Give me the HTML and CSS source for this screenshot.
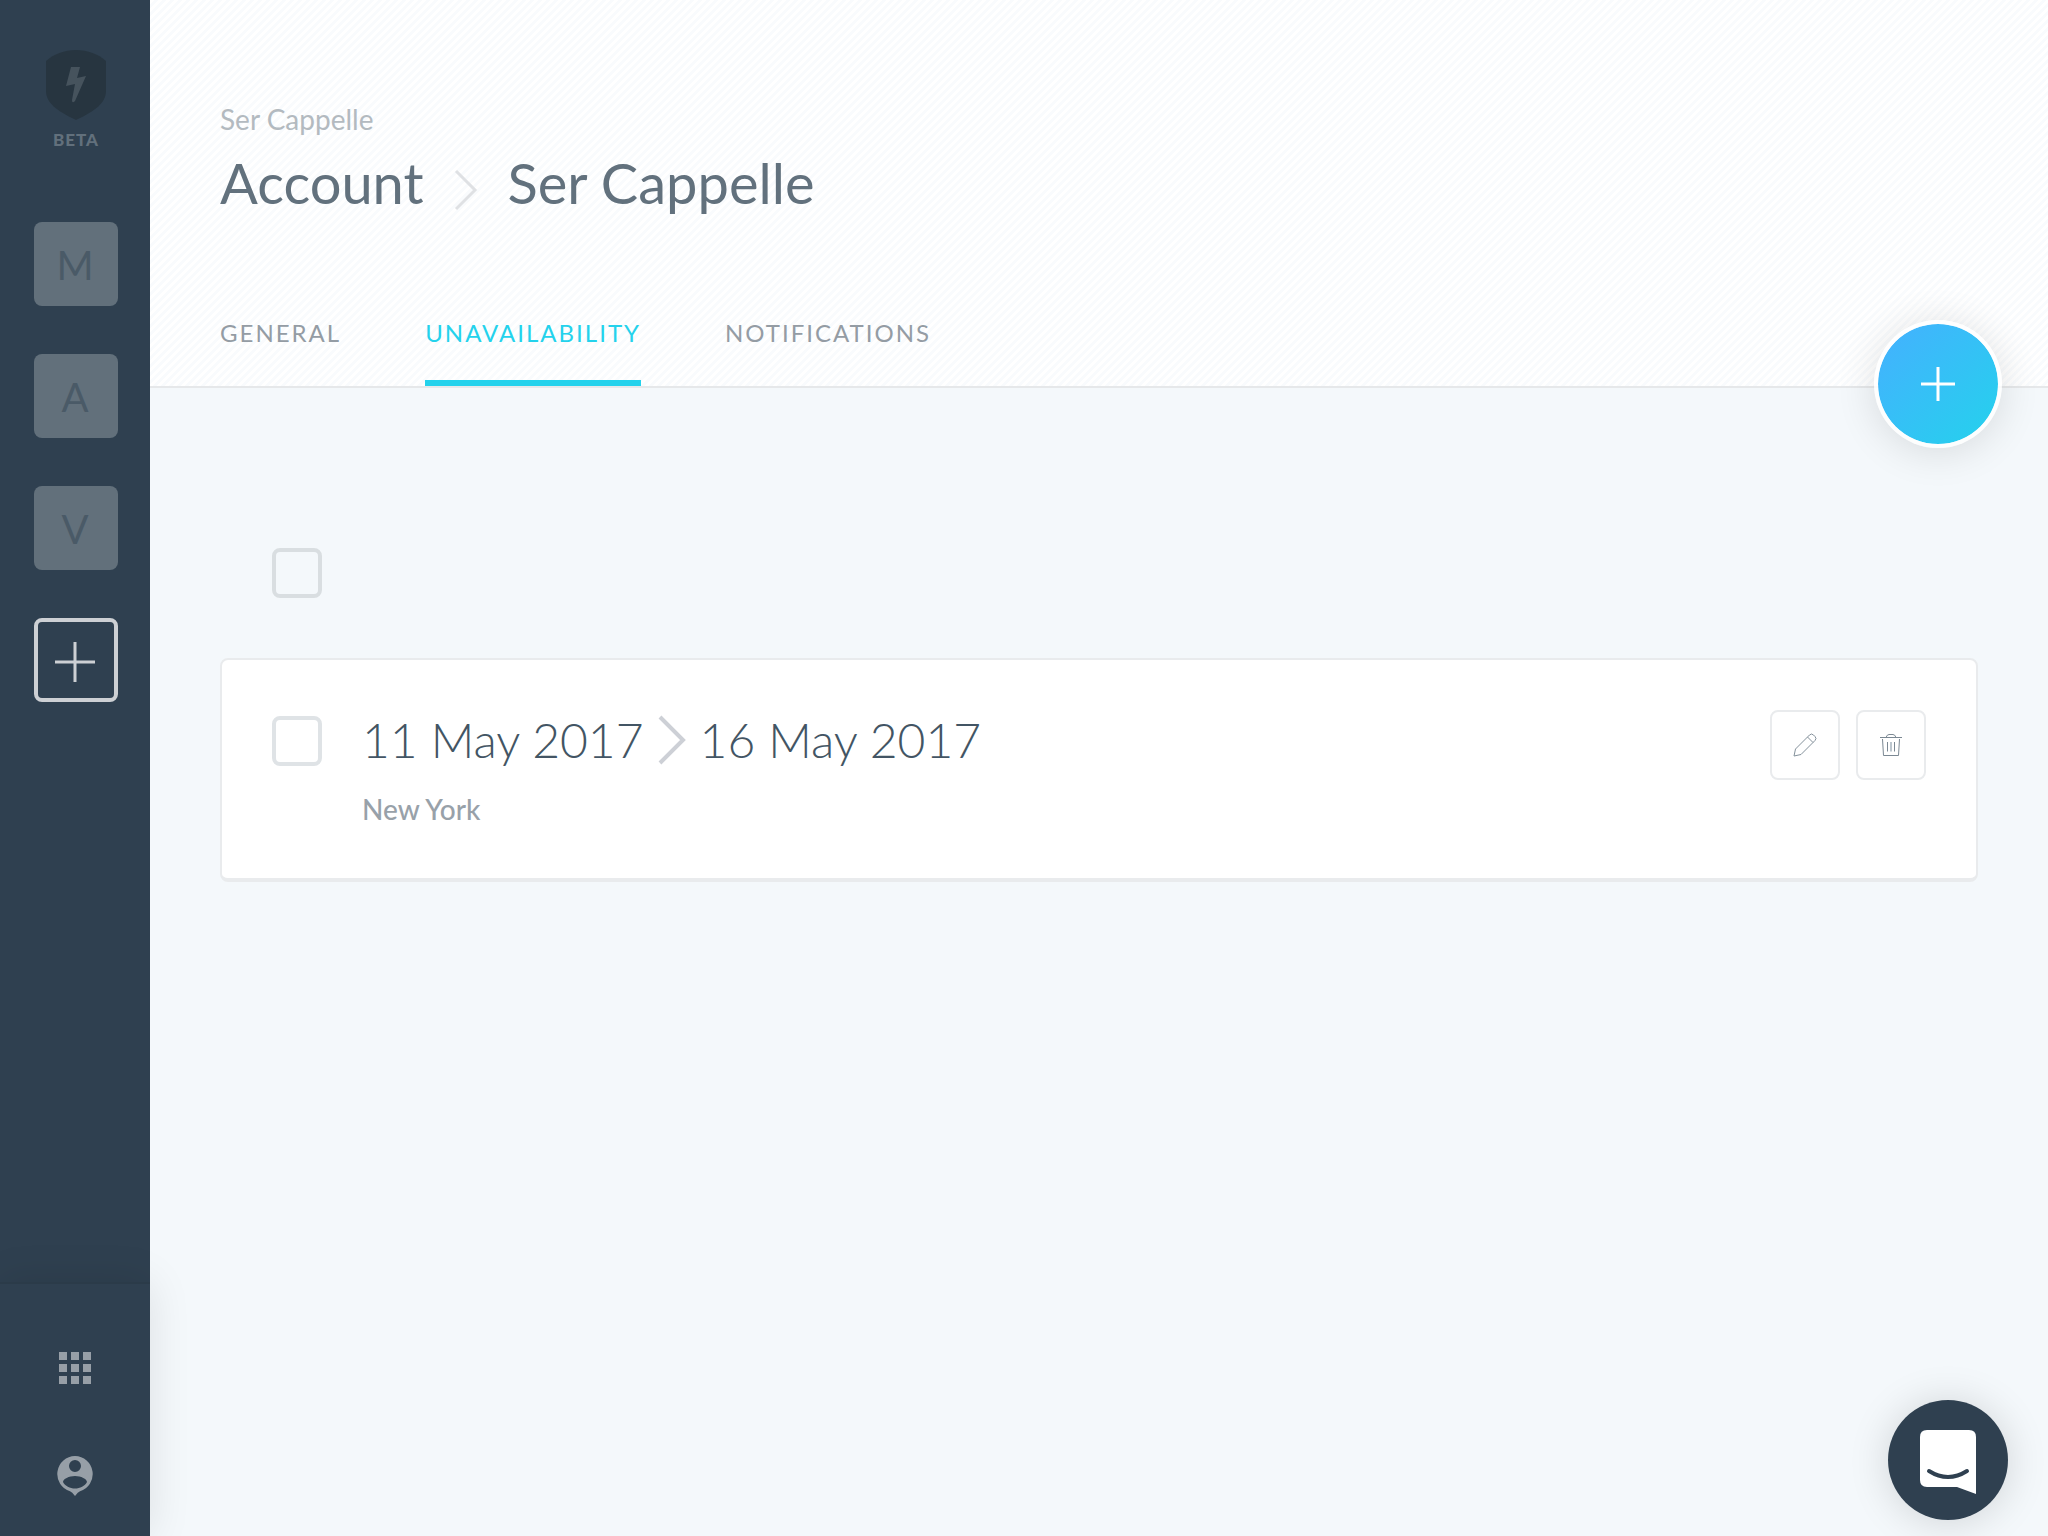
FILE: index.html
```html
<!DOCTYPE html>
<html lang="en">
<head>
<meta charset="UTF-8">
<title>Account - Ser Cappelle</title>

<link rel="stylesheet" href="styles.css">
</head>

<body>

<!-- ===== SIDEBAR ===== -->
<nav id="sidebar">
  <a class="logo" href="#">
    <svg width="60" height="70" viewBox="0 0 60 70">
      <path fill="#273540" d="M30 0C42 0 52 4 60 11V41C60 53 49 61 30 70C11 61 0 53 0 41V11C8 4 18 0 30 0Z"/>
      <path fill="#46535d" d="M25 17H34L31 28L40 26L29 51Q26 54 26 50L29 34L20 36Z"/>
    </svg>
    <span>BETA</span>
  </a>

  <div class="teams">
    <a class="team" href="#">M</a>
    <a class="team" href="#">A</a>
    <a class="team" href="#">V</a>
    <button class="addTeam" aria-label="Add team">
      <svg width="40" height="40" viewBox="0 0 40 40"><path d="M20 0V40M0 20H40" stroke="#cdd0d4" stroke-width="3"/></svg>
    </button>
  </div>

  <div class="sideBottom">
    <button aria-label="Apps">
      <svg width="32" height="32" viewBox="0 0 32 32" fill="#979fa7">
        <path d="M0 0h8v8H0zM12 0h8v8h-8zM24 0h8v8h-8zM0 12h8v8H0zM12 12h8v8h-8zM24 12h8v8h-8zM0 24h8v8H0zM12 24h8v8h-8zM24 24h8v8h-8z"/>
      </svg>
    </button>
    <button aria-label="Profile">
      <svg width="36" height="40" viewBox="0 0 36 40" fill="#979fa7">
        <path fill-rule="evenodd" d="M18 0a18 18 0 0 1 5 35.200Q21 36 18 40Q15 36 13 35.200A18 18 0 0 1 18 0ZM18 4a6 6 0 1 0 0 12a6 6 0 1 0 0-12ZM18 20C12 20 6 23 6 26C8 30 13 32.500 18 32.500S28 30 30 26C30 23 24 20 18 20Z"/>
      </svg>
    </button>
  </div>
</nav>

<!-- ===== MAIN ===== -->
<main id="main">
  <header id="header">
    <div class="subtitle">Ser Cappelle</div>
    <h1>
      Account
      <svg width="24" height="42" viewBox="0 0 24 42"><path d="M2 2L21 21L2 40" fill="none" stroke="#dfe1e4" stroke-width="3"/></svg>
      Ser Cappelle
    </h1>
    <div class="tabs">
      <a href="#">GENERAL</a>
      <a href="#" class="active">UNAVAILABILITY</a>
      <a href="#">NOTIFICATIONS</a>
    </div>
    <button id="addBtn" aria-label="Add unavailability">
      <svg width="34" height="34" viewBox="0 0 34 34"><path d="M17 0V34M0 17H34" stroke="#fff" stroke-width="3"/></svg>
    </button>
  </header>

  <section id="content">
    <div class="selectAll">
      <input type="checkbox" aria-label="Select all">
    </div>

    <div class="card">
      <input type="checkbox" aria-label="Select 11 May 2017 to 16 May 2017">
      <div class="info">
        <div class="dates">
          <span>11 May 2017</span>
          <svg width="28" height="50" viewBox="0 0 28 50"><path d="M2 2L25 25L2 48" fill="none" stroke="#cdd0d6" stroke-width="4"/></svg>
          <span>16 May 2017</span>
        </div>
        <div class="place">New York</div>
      </div>
      <div class="actions">
        <button aria-label="Edit">
          <svg width="24" height="24" viewBox="0 0 24 24" fill="none" stroke="#84919b">
            <path d="M1 23L2.500 16L16.500 2Q18.500 0 20.500 2L22 3.500Q24 5.500 22 7.500L8 21.500ZM14.500 4L20 9.500"/>
          </svg>
        </button>
        <button aria-label="Delete">
          <svg width="24" height="24" viewBox="0 0 24 24" fill="none" stroke="#7b8893">
            <path d="M1 4.500H23M7 4.500Q8 1.500 10 1.500H14Q16 1.500 17 4.500M3.500 6L4.500 22.500H19.500L20.500 6M8.500 9V18.500M15.500 9V18.500"/>
            <path d="M12 9V18.500" stroke="#bcc6ce" stroke-width="2"/>
          </svg>
        </button>
      </div>
    </div>
  </section>
</main>

<!-- ===== CHAT ===== -->
<button id="chatBtn" aria-label="Open chat">
  <svg width="56" height="64" viewBox="0 0 56 64">
    <path fill="#fff" d="M7 0H49Q56 0 56 7V64L37 57H7Q0 57 0 50V7Q0 0 7 0Z"/>
    <path d="M9 41Q28 53 47 41" fill="none" stroke="#2f4050" stroke-width="4" stroke-linecap="round"/>
  </svg>
</button>

</body>
</html>
```
FILE: styles.css
```css
* {
  box-sizing: border-box;
}

body {
  margin: 0;
  display: flex;
  min-height: 100vh;
  font-family: Lato, sans-serif;
  background: #f4f8fb;
  color: #62717d;
}

a {
  color: inherit;
  text-decoration: none;
}

button {
  display: flex;
  align-items: center;
  justify-content: center;
  padding: 0;
  border: none;
  background: none;
  cursor: pointer;
}

svg {
  display: block;
}

/* ===== SIDEBAR ===== */
#sidebar {
  flex: none;
  display: flex;
  flex-direction: column;
  width: 150px;
  background: #2f4050;
}

.logo {
  display: flex;
  flex-direction: column;
  align-items: center;
  gap: 10px;
  padding: 50px 0 0 2px;
  font-size: 17px;
  font-weight: 900;
  line-height: 20px;
  letter-spacing: 1px;
  color: #62707c;
}

.teams {
  display: flex;
  flex-direction: column;
  gap: 48px;
  padding: 72px 32px 0 34px;
}

.team,
.addTeam {
  height: 84px;
  border-radius: 8px;
}

.team {
  padding-right: 2px;
  background: #62707b;
  color: #4a5a67;
  font-size: 40px;
  line-height: 86px;
  text-align: center;
}

.addTeam {
  padding: 4px 2px 0 0;
  border: 4px solid #cdd0d4;
}

.sideBottom {
  display: flex;
  flex-direction: column;
  align-items: center;
  gap: 72px;
  margin-top: auto;
  padding: 68px 0 40px;
  border-top: 2px solid #2b3b49;
  background: #2f4050;
  box-shadow: 0 0 40px rgba(0, 0, 0, 0.1);
}

/* ===== HEADER ===== */
#main {
  flex: 1;
}

#header {
  position: relative;
  padding: 102px 70px 0;
  border-bottom: 2px solid #e6e8ea;
  background: linear-gradient(135deg, #fff 25%, #f9fbfd 25% 50%, #fff 50% 75%, #f9fbfd 75%) 0 0 / 8px 8px;
}

.subtitle {
  font-size: 28px;
  line-height: 34px;
  color: #b3bac0;
}

h1 {
  display: flex;
  align-items: center;
  gap: 30px;
  margin: 12px 0 100px;
  font-size: 56px;
  font-weight: 400;
  line-height: 70px;
}

h1 svg {
  margin-top: 14px;
}

.tabs {
  display: flex;
  gap: 84px;
}

.tabs a {
  padding-bottom: 32px;
  border-bottom: 6px solid transparent;
  font-size: 24px;
  line-height: 30px;
  letter-spacing: 2px;
  color: #949ca4;
}

.tabs .active {
  border-color: #24d2ec;
  color: #24d2ec;
}

/* add button sits over the header line */
#addBtn {
  position: absolute;
  right: 46px;
  bottom: -62px;
  width: 128px;
  height: 128px;
  border: 4px solid rgba(255, 255, 255, 0.8);
  border-radius: 50%;
  background: linear-gradient(135deg, #45b0ff, #24d2ec) padding-box;
  box-shadow: 0 4px 40px rgba(0, 0, 0, 0.12);
}

/* ===== CONTENT ===== */
#content {
  padding: 160px 70px 0;
}

input[type="checkbox"] {
  appearance: none;
  flex: none;
  width: 50px;
  height: 50px;
  margin: 0;
  border: 4px solid #dfe3e6;
  border-radius: 8px;
}

.selectAll {
  display: flex;
  padding: 0 52px 60px;
}

.selectAll input[type="checkbox"] {
  border-color: #d9dee1;
}

.card {
  display: flex;
  align-items: flex-start;
  padding: 50px 50px 52px;
  border: 2px solid #e9ebed;
  border-bottom-width: 4px;
  border-radius: 8px;
  background: #fff;
}

.card input[type="checkbox"] {
  margin-top: 6px;
}

.info {
  flex: 1;
  margin-left: 40px;
}

.dates {
  display: flex;
  align-items: center;
  gap: 14px;
  font-size: 48px;
  font-weight: 300;
  line-height: 60px;
  color: #435564;
}

.place {
  margin-top: 22px;
  font-size: 28px;
  font-weight: 500;
  line-height: 34px;
  color: #98a1a9;
}

.actions {
  display: flex;
  gap: 16px;
}

.actions button {
  width: 70px;
  height: 70px;
  border: 2px solid #e9ebed;
  border-radius: 8px;
}

/* ===== CHAT ===== */
#chatBtn {
  position: fixed;
  right: 40px;
  bottom: 16px;
  width: 120px;
  height: 120px;
  padding-top: 4px;
  border-radius: 50%;
  background: #2f4050;
  box-shadow: 0 2px 40px rgba(0, 0, 0, 0.15);
}
```
